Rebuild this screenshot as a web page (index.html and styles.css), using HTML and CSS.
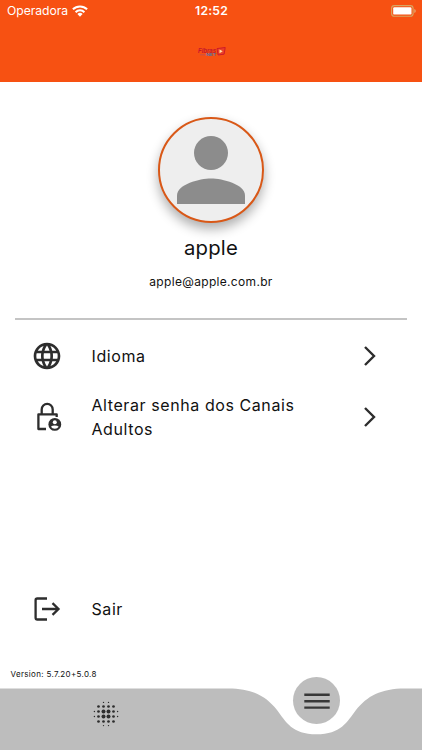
FILE: index.html
```html
<!DOCTYPE html>
<html lang="pt-BR">
<head>
<meta charset="utf-8">
<meta name="viewport" content="width=device-width">
<title>Perfil</title>
<link rel="stylesheet" href="styles.css">
</head>
<body>
<header class="header">
  <div class="status">
    <div class="carrier"><span class="carrier-name">Operadora</span>
      <svg class="wifi" width="16" height="12" viewBox="0 0 16 12"><g fill="none" stroke="#fff" stroke-width="2"><path d="M.9 4.3a10.1 10.1 0 0 1 14.2 0"/><path d="M3.6 7.2a6.2 6.2 0 0 1 8.8 0"/></g><path d="M8 11.7 5.4 9a3.7 3.7 0 0 1 5.2 0z" fill="#fff"/></svg>
    </div>
    <span class="time">12:52</span>
    <svg class="battery" width="25" height="12" viewBox="0 0 25 12"><rect x=".6" y=".6" width="21.5" height="10.6" rx="2.8" fill="none" stroke="#d7a763" stroke-width="1.1"/><rect x="2.2" y="2.2" width="18.3" height="7.4" rx="1.2" fill="#fff"/><path d="M23.4 4v4q1.3-.5 1.3-2t-1.3-2" fill="#e3b27c"/></svg>
  </div>
  <div class="brand">
    <svg width="28" height="9" viewBox="0 0 28 9"><text x="0" y="5.8" class="brand-name" textLength="18" lengthAdjust="spacingAndGlyphs">Fibras</text><text x="8" y="8.7" class="brand-sub" textLength="10" lengthAdjust="spacingAndGlyphs">NET</text><path d="M2 7.8h5" stroke="#b05362" stroke-width=".7"/><path d="m19 1.6 8.2-1.1-1.1 6.7-6 .8z" fill="#ec4128" stroke="#c9162a" stroke-width=".9"/><path d="m21.5 2.6 3.2 1.7-3.2 1.9z" fill="#ffe2a8"/></svg>
  </div>
</header>
<main class="content">
  <section class="profile">
    <div class="avatar"><svg width="68" height="68" viewBox="0 0 68 68"><circle cx="34" cy="17" r="17" fill="#8c8c8c"/><path d="M0 68V59.5C0 48.2 22.7 42.5 34 42.5S68 48.2 68 59.5V68z" fill="#8c8c8c"/></svg></div>
    <h1 class="name">apple</h1>
    <p class="email">apple@apple.com.br</p>
  </section>
  <nav class="menu">
    <a class="row">
      <svg class="icon" width="32" height="32" viewBox="0 0 24 24"><path fill="#2d2d2d" d="M11.99 2C6.47 2 2 6.48 2 12s4.47 10 9.99 10C17.52 22 22 17.52 22 12S17.52 2 11.99 2zm6.93 6h-2.95c-.32-1.25-.78-2.45-1.38-3.56 1.84.63 3.37 1.91 4.33 3.56zM12 4.04c.83 1.2 1.48 2.53 1.91 3.96h-3.82c.43-1.43 1.08-2.76 1.91-3.96zM4.26 14C4.1 13.36 4 12.69 4 12s.1-1.36.26-2h3.38c-.08.66-.14 1.32-.14 2s.06 1.34.14 2H4.26zm.82 2h2.95c.32 1.25.78 2.45 1.38 3.56-1.84-.63-3.37-1.9-4.33-3.56zm2.95-8H5.08c.96-1.66 2.49-2.93 4.33-3.56C8.81 5.55 8.35 6.75 8.03 8zM12 19.96c-.83-1.2-1.48-2.53-1.91-3.96h3.82c-.43 1.43-1.08 2.76-1.91 3.96zM14.34 14H9.66c-.09-.66-.16-1.32-.16-2s.07-1.35.16-2h4.68c.09.65.16 1.32.16 2s-.07 1.34-.16 2zm.25 5.56c.6-1.11 1.06-2.31 1.38-3.56h2.95c-.96 1.65-2.49 2.93-4.33 3.56zM16.36 14c.08-.66.14-1.32.14-2s-.06-1.34-.14-2h3.38c.16.64.26 1.31.26 2s-.1 1.36-.26 2h-3.38z"/></svg>
      <span class="label">Idioma</span>
      <svg class="chevron" width="14" height="22" viewBox="0 0 14 22"><path d="m2 2 9 9-9 9"/></svg>
    </a>
    <a class="row row-tall">
      <svg class="icon" width="32" height="32" viewBox="0 0 32 32"><g fill="none" stroke="#2d2d2d" stroke-width="2.3" stroke-linejoin="round"><path d="M15 28H7.4V13.4h18.3v2.7"/><path d="M10.7 13V8.4a5.5 5.5 0 0 1 11 0V13"/></g><circle cx="23.8" cy="23.4" r="6.4" fill="#2d2d2d"/><circle cx="23.8" cy="21.3" r="2" fill="#fff"/><path d="M19.9 25.8q1.2-1.4 3.9-1.4t3.9 1.4q-1.3 2-3.9 2t-3.9-2" fill="#fff"/></svg>
      <span class="label">Alterar senha dos Canais Adultos</span>
      <svg class="chevron" width="14" height="22" viewBox="0 0 14 22"><path d="m2 2 9 9-9 9"/></svg>
    </a>
  </nav>
  <a class="row logout">
    <svg class="icon" width="32" height="32" viewBox="0 0 32 32"><g fill="none" stroke="#2d2d2d" stroke-width="2.3"><path d="M16 5.5H6.3Q4.6 5.5 4.6 7.2V24.7Q4.6 26.5 6.3 26.5H16" /><path d="M11 16h16.5M21.5 10.2l6 5.8-6 5.8"/></g></svg>
    <span class="label">Sair</span>
  </a>
  <p class="version">Version: 5.7.20+5.0.8</p>
</main>
<footer class="tabbar">
  <svg class="curve" width="422" height="62" viewBox="0 0 422 62"><path fill="#bdbdbd" d="M0 .4H228C252 .4 266 8 277 22C286 34 292 46.3 316.5 46.3S347 34 356 22C367 8 381 .4 405 .4H422V62H0z"/></svg>
  <svg class="blur" width="26" height="26" viewBox="0 0 26 26"><g fill="#2d2d2d"><circle cx="10.5" cy="10.5" r="2"/><circle cx="15.5" cy="10.5" r="2"/><circle cx="10.5" cy="15.5" r="2"/><circle cx="15.5" cy="15.5" r="2"/><circle cx="5.5" cy="5.5" r="1.35"/><circle cx="10.5" cy="5.5" r="1.35"/><circle cx="15.5" cy="5.5" r="1.35"/><circle cx="20.5" cy="5.5" r="1.35"/><circle cx="5.5" cy="10.5" r="1.35"/><circle cx="20.5" cy="10.5" r="1.35"/><circle cx="5.5" cy="15.5" r="1.35"/><circle cx="20.5" cy="15.5" r="1.35"/><circle cx="5.5" cy="20.5" r="1.35"/><circle cx="10.5" cy="20.5" r="1.35"/><circle cx="15.5" cy="20.5" r="1.35"/><circle cx="20.5" cy="20.5" r="1.35"/><circle cx="10.5" cy="1.4" r=".7"/><circle cx="15.5" cy="1.4" r=".7"/><circle cx="10.5" cy="24.6" r=".7"/><circle cx="15.5" cy="24.6" r=".7"/><circle cx="1.4" cy="10.5" r=".7"/><circle cx="1.4" cy="15.5" r=".7"/><circle cx="24.6" cy="10.5" r=".7"/><circle cx="24.6" cy="15.5" r=".7"/></g></svg>
  <div class="fab"><svg width="26" height="16" viewBox="0 0 26 16"><path d="M.3 1.7h25.4M.3 8.2h25.4M.3 14.6h25.4" stroke="#383838" stroke-width="2.4"/></svg></div>
</footer>
</body>
</html>
```
FILE: styles.css
```css
* { box-sizing: border-box; }
body {
  margin: 0;
  width: 422px;
  height: 750px;
  display: flex;
  flex-direction: column;
  overflow: hidden;
  background: #fff;
  color: #111;
  font-family: Inter, "Liberation Sans", sans-serif;
}
svg { display: block; flex: none; }
h1, p { margin: 0; font-weight: 400; }
.header { height: 81.5px; flex: none; background: #f75112; color: #fff; }
.status {
  height: 22px;
  padding: 0 6px 0 7px;
  display: grid;
  grid-template-columns: 1fr auto 1fr;
  align-items: center;
}
.carrier { display: flex; align-items: center; gap: 4.5px; font-size: 12.2px; line-height: 22px; }
.carrier-name { letter-spacing: -.06px; }
.time { font-size: 12.2px; font-weight: 600; letter-spacing: .2px; line-height: 22px; }
.battery { justify-self: end; }
.brand { display: flex; justify-content: center; padding: 25px 0 0 2px; }
.brand-name { font: italic 700 6.5px "Liberation Sans", sans-serif; fill: #c5162d; }
.brand-sub { font: 700 3.6px "Liberation Sans", sans-serif; fill: #5272a5; }
.content { flex: 1; display: flex; flex-direction: column; }
.profile {
  height: 238px;
  margin: 0 15px;
  padding-top: 35.8px;
  display: flex;
  flex-direction: column;
  align-items: center;
  border-bottom: 2px solid #c4c4c4;
}
.avatar {
  width: 106px;
  height: 106px;
  flex: none;
  padding: 16.5px 17px;
  border: 2px solid #d95817;
  border-radius: 50%;
  background: #eee;
  box-shadow: 0 6px 12px rgba(0, 0, 0, .32);
}
.name { margin-top: 11.7px; font-size: 20.3px; line-height: 26px; letter-spacing: .2px; }
.email { margin-top: 11px; font-size: 12px; line-height: 20px; letter-spacing: .32px; }
.menu { padding-top: 6px; }
.row { display: flex; align-items: center; height: 61px; padding: 0 45px 0 31px; }
.label { width: 224px; margin: -1px 0 0 28.5px; font-size: 16px; line-height: 24px; letter-spacing: .58px; }
.chevron { margin-left: auto; fill: none; stroke: #2d2d2d; stroke-width: 2.4; }
.logout { margin-top: 131px; }
.version { margin-top: 27px; padding-left: 10.5px; font-size: 8px; line-height: 14px; letter-spacing: .32px; }
.tabbar { position: relative; height: 62px; flex: none; padding: 13px 0 0 93px; }
.curve { position: absolute; left: 0; top: 0; }
.blur { position: relative; }
.fab {
  position: absolute;
  left: 293px;
  top: -10.8px;
  width: 47px;
  height: 47px;
  display: flex;
  align-items: center;
  justify-content: center;
  border-radius: 50%;
  background: #bdbdbd;
}
```
